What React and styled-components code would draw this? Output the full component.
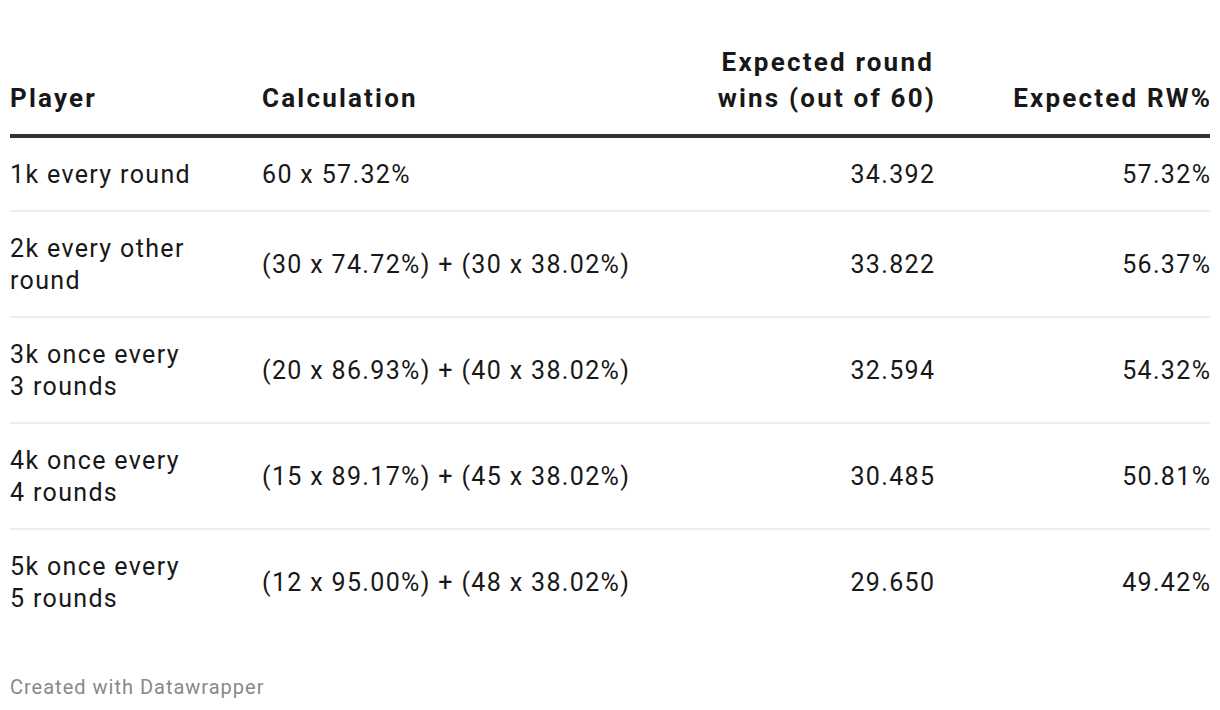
import React from 'react'
import styled, { createGlobalStyle } from 'styled-components'

const GlobalStyle = createGlobalStyle`
  body {
    margin: 0;
    background: #ffffff;
    font-family: Roboto, "Liberation Sans", sans-serif;
    color: #181818;
  }
`

const Wrapper = styled.div`
  padding: 44px 10px 0;
  width: 1200px;
`

const Table = styled.table`
  width: 1200px;
  border-collapse: collapse;
  table-layout: fixed;
  font-size: 25px;
  line-height: 32px;
`

const HeadCell = styled.th`
  font-size: 26px;
  line-height: 36px;
  font-weight: 700;
  letter-spacing: 2.2px;
  text-align: ${props => props.$right ? 'right' : 'left'};
  vertical-align: bottom;
  padding: 0 0 18px 0;
  border-bottom: 4px solid #333333;
  color: #181818;
`

const Row = styled.tr`
  border-bottom: ${props => props.$last ? 'none' : '2px solid #eeeeee'};
`

const Cell = styled.td`
  letter-spacing: 1.35px;
  text-align: ${props => props.$right ? 'right' : 'left'};
  vertical-align: middle;
  padding: 21px ${props => props.$padRight || 0}px 19px 0;
  font-weight: 400;
`

// cancels the trailing letter-spacing so right-aligned text meets the edge
const Trim = styled.span`
  margin-right: ${props => props.$by}px;
`

const Footer = styled.div`
  margin-top: 41px;
  font-size: 20px;
  line-height: 24px;
  letter-spacing: 1px;
  color: #888888;
`

const rows = [
  ['1k every round', '60 x 57.32%', '34.392', '57.32%'],
  ['2k every other round', '(30 x 74.72%) + (30 x 38.02%)', '33.822', '56.37%'],
  ['3k once every 3\u00a0rounds', '(20 x 86.93%) + (40 x 38.02%)', '32.594', '54.32%'],
  ['4k once every 4\u00a0rounds', '(15 x 89.17%) + (45 x 38.02%)', '30.485', '50.81%'],
  ['5k once every 5\u00a0rounds', '(12 x 95.00%) + (48 x 38.02%)', '29.650', '49.42%'],
]

const App = () => {
  return (
    <Wrapper>
      <GlobalStyle />
      <Table>
        <colgroup>
          <col style={{ width: '252px' }} />
          <col style={{ width: '380px' }} />
          <col style={{ width: '292px' }} />
          <col style={{ width: '276px' }} />
        </colgroup>
        <thead>
          <tr>
            <HeadCell>Player</HeadCell>
            <HeadCell>Calculation</HeadCell>
            <HeadCell $right><Trim $by={-2.2}>Expected round<br />wins (out of 60)</Trim></HeadCell>
            <HeadCell $right><Trim $by={-2.2}>Expected RW%</Trim></HeadCell>
          </tr>
        </thead>
        <tbody>
          {rows.map((r, i) => (
            <Row key={i} $last={i === rows.length - 1}>
              <Cell $padRight={40}>{r[0]}</Cell>
              <Cell>{r[1]}</Cell>
              <Cell $right><Trim $by={-1.35}>{r[2]}</Trim></Cell>
              <Cell $right><Trim $by={-1.35}>{r[3]}</Trim></Cell>
            </Row>
          ))}
        </tbody>
      </Table>
      <Footer>Created with Datawrapper</Footer>
    </Wrapper>
  )
}

export default App
